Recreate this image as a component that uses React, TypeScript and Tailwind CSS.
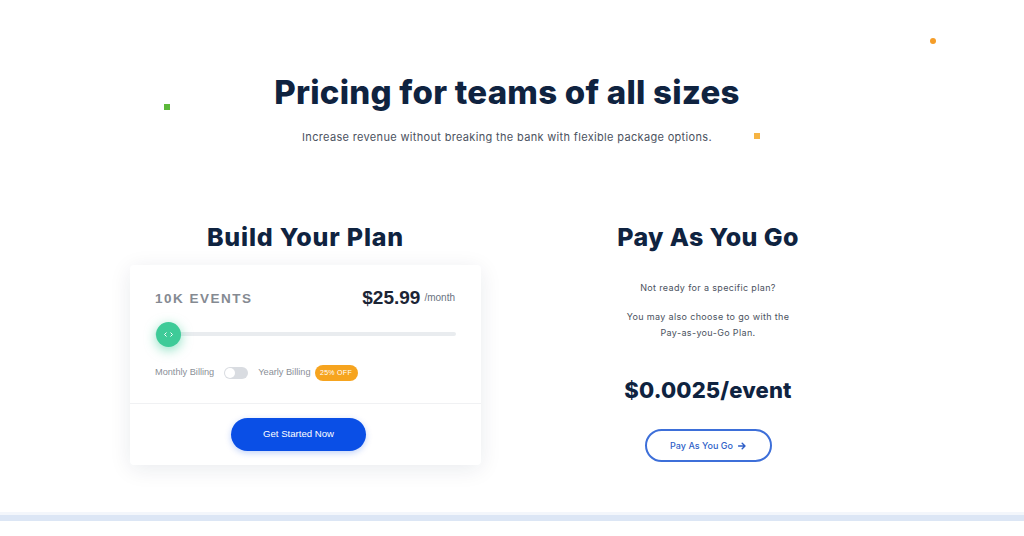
import React from "react";

export default function App() {
  const inter = { fontFamily: "Inter, 'Noto Sans', sans-serif" } as React.CSSProperties;
  const arial = { fontFamily: "'Liberation Sans', Arial, sans-serif" } as React.CSSProperties;
  return (
    <div className="relative w-[1024px] h-[536px] overflow-hidden bg-white flex flex-col" style={inter}>
      <div className="absolute left-[164px] top-[104px] w-[6px] h-[6px] bg-[#5cb83a]" />
      <div className="absolute left-[754px] top-[133px] w-[6px] h-[6px] bg-[#f6b443]" />
      <div className="absolute left-[930px] top-[38px] w-[6px] h-[6px] rounded-full bg-[#f59d28]" />

      <h1 className="pt-[72px] pr-[10px] text-center text-[33px] leading-[40px] font-extrabold text-[#0f2340] tracking-[0.25px]">
        Pricing for teams of all sizes
      </h1>
      <p className="mt-[17px] pr-[10px] text-center text-[11px] leading-[16px] text-[#4b5260] tracking-[0.33px]">
        Increase revenue without breaking the bank with flexible package options.
      </p>

      <div className="mt-[76px] flex pl-[130px] gap-[77px]">
        <div className="w-[351px] flex flex-col">
          <h2 className="text-center text-[25px] leading-[32px] font-extrabold text-[#0f2340] tracking-[0.8px]">Build Your Plan</h2>
          <div className="mt-3 bg-white rounded-[4px] shadow-[0_4px_22px_rgba(15,35,64,0.09)]" style={arial}>
            <div className="h-[139px] px-[25px] pt-[23px] border-b border-[#f0f1f3]">
              <div className="flex items-end justify-between h-[20px]">
                <span className="text-[13.5px] font-bold tracking-[1.5px] text-[#858a92] leading-[16px] mb-[1px]">10K EVENTS</span>
                <span className="flex items-end">
                  <span className="text-[19px] font-bold text-[#1c2535] leading-[20px]">$25.99</span>
                  <span className="text-[10px] text-[#6b7280] ml-[4px] mb-[5px] leading-[10px] pr-[1px]">/month</span>
                </span>
              </div>
              <div className="relative mt-[14px] h-[24px] flex items-center">
                <div className="w-full h-[4px] rounded-full bg-[#e9ecef]" />
                <div className="absolute left-[1px] top-0 w-[25px] h-[25px] rounded-full bg-[#3ecb98] shadow-[0_3px_12px_rgba(62,203,152,0.6)] flex items-center justify-center gap-[3px]">
                  <svg width="3" height="5" viewBox="0 0 3 5"><path d="M2.5 0.5 L0.5 2.5 L2.5 4.5" stroke="white" strokeWidth="1" fill="none" /></svg>
                  <svg width="3" height="5" viewBox="0 0 3 5"><path d="M0.5 0.5 L2.5 2.5 L0.5 4.5" stroke="white" strokeWidth="1" fill="none" /></svg>
                </div>
              </div>
              <div className="mt-[19px] flex items-center h-[16px]">
                <span className="text-[9.2px] text-[#8a8f97]">Monthly Billing</span>
                <div className="ml-[10px] w-[24px] h-[12px] rounded-full bg-[#d9dce1] relative">
                  <div className="absolute left-[1px] top-[1px] w-[10px] h-[10px] rounded-full bg-white" />
                </div>
                <span className="ml-[10px] text-[9.2px] text-[#8a8f97]">Yearly Billing</span>
                <span className="ml-[4px] w-[43px] h-[16px] rounded-full bg-[#f6a41f] text-white text-[7px] flex items-center justify-center tracking-[0.3px]">25% OFF</span>
              </div>
            </div>
            <div className="h-[61px] flex items-center justify-center pr-[14px]">
              <button className="w-[135px] h-[33px] rounded-full bg-[#0a4fe6] text-white text-[9.6px] shadow-[0_2px_6px_rgba(10,79,230,0.25)]">
                Get Started Now
              </button>
            </div>
          </div>
        </div>

        <div className="w-[300px] flex flex-col items-center">
          <h2 className="text-center text-[25px] leading-[32px] font-extrabold text-[#0f2340] tracking-[0.4px]">Pay As You Go</h2>
          <p className="mt-[27px] text-[9px] leading-[16px] text-[#4b5260] text-center tracking-[0.35px]">Not ready for a specific plan?</p>
          <p className="mt-[13px] text-[9px] leading-[16px] text-[#4b5260] text-center tracking-[0.35px]">
            You may also choose to go with the
            <br />
            Pay-as-you-Go Plan.
          </p>
          <div className="mt-[35px] text-[22px] leading-[28px] font-extrabold text-[#0f2340] tracking-[0.15px]">$0.0025/event</div>
          <button className="mt-[25px] w-[127px] h-[33px] rounded-full border-2 border-[#3d6fd9] text-[#2f5fc8] text-[9px] flex items-center justify-center gap-[5px] font-medium">
            Pay As You Go
            <svg width="8" height="8" viewBox="0 0 8 8"><path d="M0.5 4 H7 M4.2 1.2 L7 4 L4.2 6.8" stroke="#2f5fc8" strokeWidth="1.4" fill="none" strokeLinecap="round" strokeLinejoin="round" /></svg>
          </button>
        </div>
      </div>

      <div className="absolute left-0 right-0 top-[515px] h-[6px] bg-[#dce6f5]" />
      <div className="absolute left-0 right-0 top-[512px] h-[3px] bg-[#f3f6fb]" />
    </div>
  );
}
